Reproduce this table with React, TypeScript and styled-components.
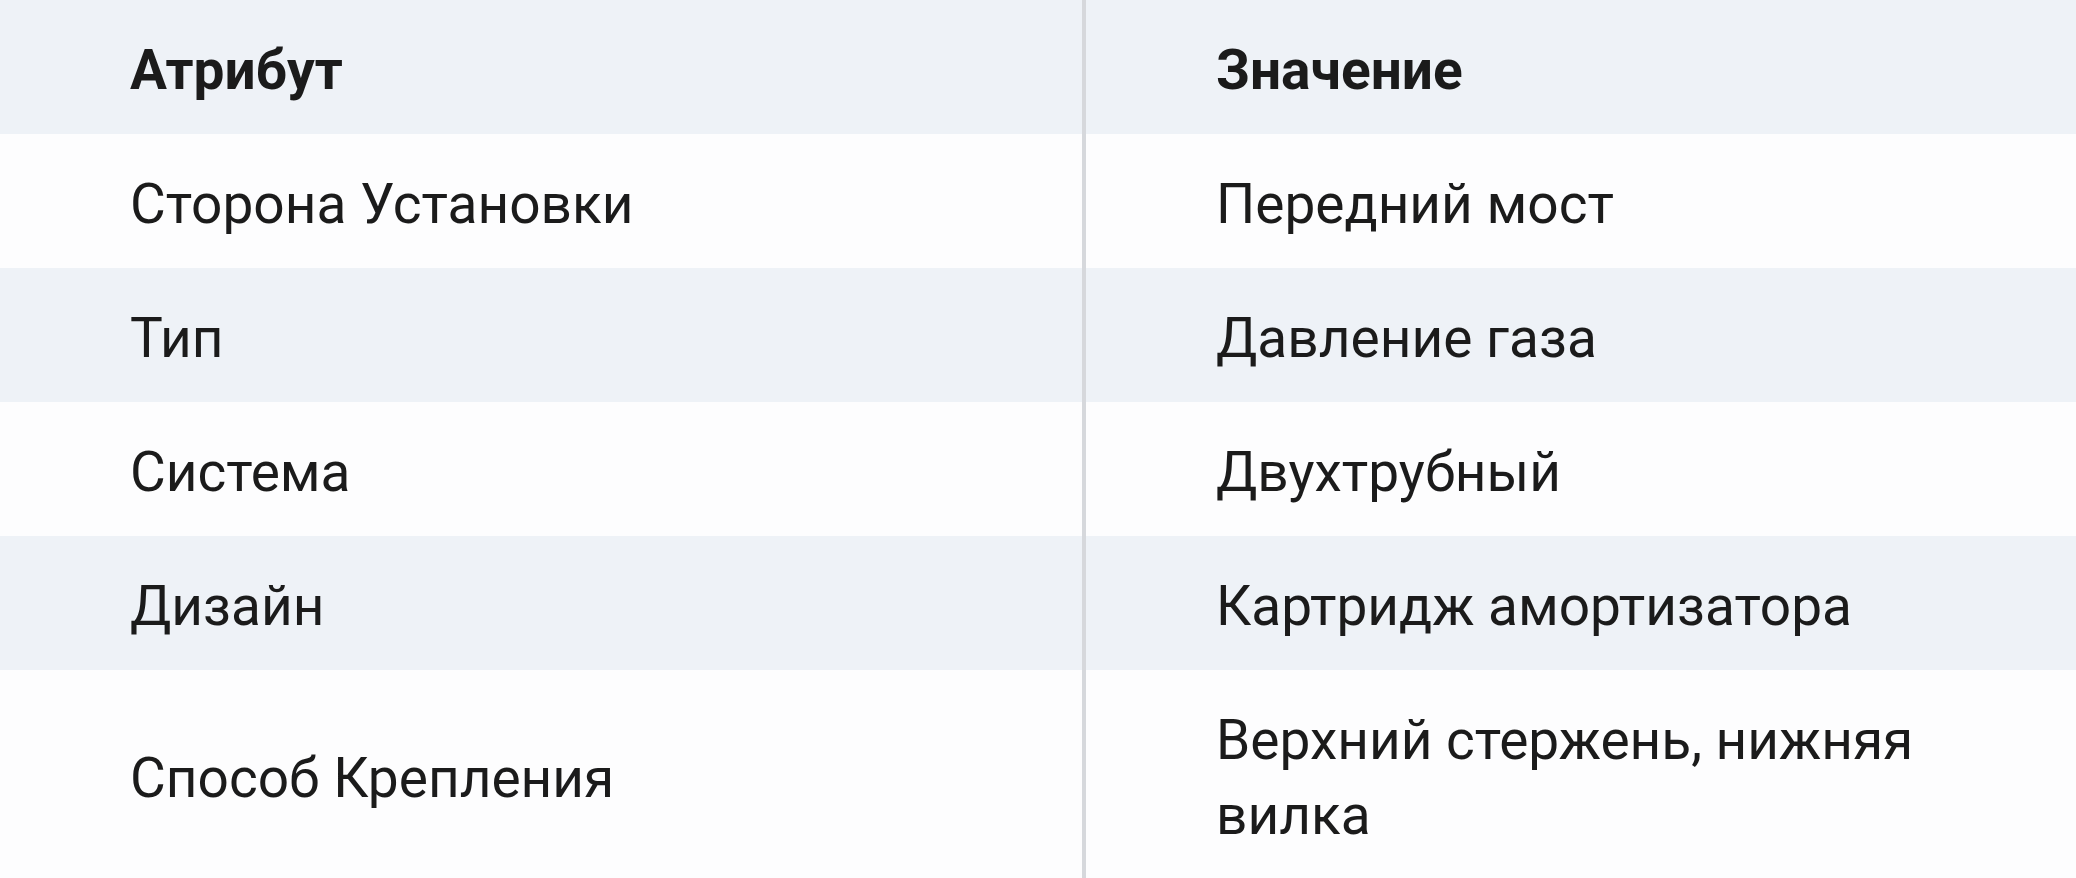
import React from "react";
import styled, { createGlobalStyle } from "styled-components";

const GlobalStyle = createGlobalStyle`
  html, body {
    margin: 0;
    padding: 0;
    background: #fdfdfe;
  }
  body {
    font-family: "Source Sans Pro", Roboto, "Noto Sans", sans-serif;
    color: #1b1b1b;
  }
`;

const Table = styled.table`
  width: 2076px;
  border-collapse: collapse;
  table-layout: fixed;
  font-size: 55px;
  line-height: 75px;
`;

const Row = styled.tr<{ $shaded: boolean }>`
  background: ${(p) => (p.$shaded ? "#eef2f7" : "#fdfdfe")};
`;

const HeadCell = styled.th<{ $first?: boolean }>`
  text-align: left;
  font-weight: 700;
  padding: 33px 40px 26px 130px;
  vertical-align: middle;
  ${(p) => (p.$first ? "width: 912px; border-right: 4px solid #d6d8dc;" : "")}
`;

const Cell = styled.td<{ $first?: boolean }>`
  font-weight: 400;
  padding: 33px 40px 26px 130px;
  vertical-align: middle;
  ${(p) => (p.$first ? "border-right: 4px solid #d6d8dc;" : "")}
`;

const rows: [string, string][] = [
  ["Сторона Установки", "Передний мост"],
  ["Тип", "Давление газа"],
  ["Система", "Двухтрубный"],
  ["Дизайн", "Картридж амортизатора"],
  ["Способ Крепления", "Верхний стержень, нижняя вилка"],
];

export default function App() {
  return (
    <>
      <GlobalStyle />
      <Table>
        <thead>
          <Row $shaded>
            <HeadCell $first>Атрибут</HeadCell>
            <HeadCell>Значение</HeadCell>
          </Row>
        </thead>
        <tbody>
          {rows.map(([a, v], i) => (
            <Row key={a} $shaded={i % 2 === 1}>
              <Cell $first>{a}</Cell>
              <Cell>{v}</Cell>
            </Row>
          ))}
        </tbody>
      </Table>
    </>
  );
}
